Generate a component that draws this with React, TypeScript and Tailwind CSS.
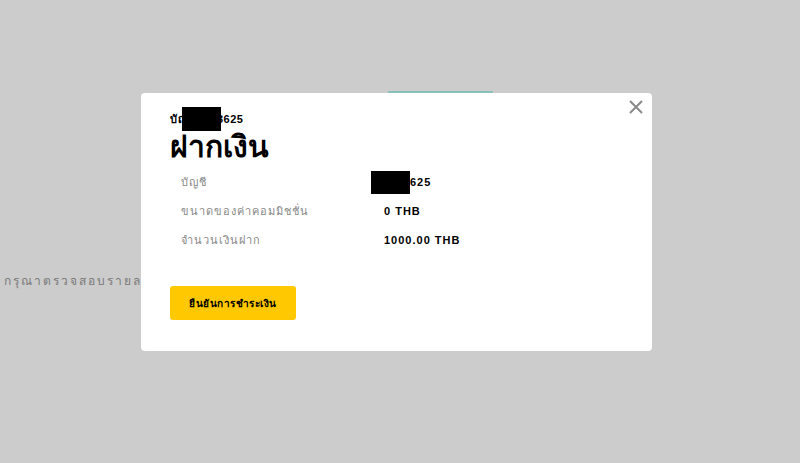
import React from 'react';

const rows = [
  { label: 'บัญชี', value: '625', redacted: true },
  { label: 'ขนาดของค่าคอมมิชชั่น', value: '0 THB' },
  { label: 'จำนวนเงินฝาก', value: '1000.00 THB' },
];

export default function App() {
  return (
    <div className="relative h-[463px] w-[800px] overflow-hidden bg-white font-['Liberation_Sans',sans-serif]">
      {/* page behind the dialog */}
      <div className="flex flex-col">
        <div className="ml-[388px] mt-[91px] h-[2px] w-[105px] bg-[#aef0ec]" />
        <div className="mt-[179px] whitespace-nowrap pl-[4px] text-[12px] tracking-[2px] text-[#9a9a9a]">
          กรุณาตรวจสอบรายละเอียดการชำระเงินก่อนยืนยัน
        </div>
      </div>

      {/* overlay */}
      <div className="absolute inset-0 bg-black/20">
        <div className="ml-[141px] mt-[93px] flex h-[258px] w-[511px] flex-col rounded-[4px] bg-white pl-[29px] pt-[14px]">
          <div className="flex justify-end pr-[8px]">
            <svg width="16" height="16" viewBox="0 0 16 16" className="-mt-[8px]">
              <path d="M2 2 L14 14 M14 2 L2 14" stroke="#8a8a8a" strokeWidth="2" />
            </svg>
          </div>
          <div className="relative -mt-[3px] flex items-center text-[11px] font-bold leading-[14px] tracking-[0.5px] text-black">
            <span>บัญ</span>
            <span className="relative -my-[5px] -ml-[5px] h-[24px] w-[39px] bg-black" />
            <span className="-ml-[4px]">3625</span>
          </div>
          <h1 className="mt-[4px] text-[30px] font-bold leading-[34px] text-black">ฝากเงิน</h1>
          <div className="mt-[10px] flex flex-col gap-[12px] pl-[11px]">
            {rows.map((r) => (
              <div key={r.label} className="flex h-[17px] items-center">
                <span className="w-[203px] text-[11px] tracking-[1px] text-[#888]">{r.label}</span>
                {r.redacted ? (
                  <span className="-ml-[13px] flex items-center text-[11px] font-bold tracking-[1px] text-black">
                    <span className="h-[23px] w-[39px] bg-black" />
                    {r.value}
                  </span>
                ) : (
                  <span className="text-[11px] font-bold tracking-[1px] text-black">{r.value}</span>
                )}
              </div>
            ))}
          </div>
          <button className="mt-[37px] flex h-[34px] w-[126px] items-center justify-center rounded-[3px] bg-[#ffc800] text-[10px] font-bold tracking-[0.5px] text-black">
            ยืนยันการชำระเงิน
          </button>
        </div>
      </div>
    </div>
  );
}
